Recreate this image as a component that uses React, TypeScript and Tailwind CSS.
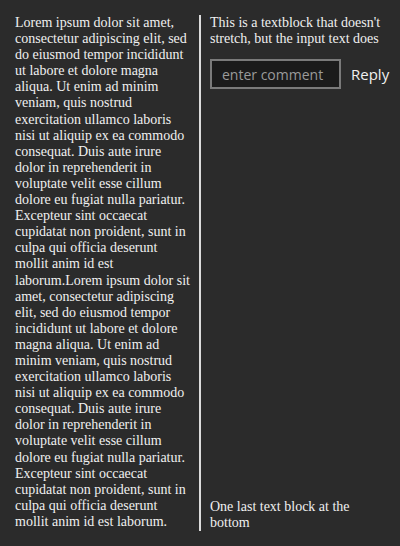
const lorem =
  "Lorem ipsum dolor sit amet, consectetur adipiscing elit, sed do eiusmod tempor incididunt ut labore et dolore magna aliqua. Ut enim ad minim veniam, quis nostrud exercitation ullamco laboris nisi ut aliquip ex ea commodo consequat. Duis aute irure dolor in reprehenderit in voluptate velit esse cillum dolore eu fugiat nulla pariatur. Excepteur sint occaecat cupidatat non proident, sunt in culpa qui officia deserunt mollit anim id est laborum.";

export default function App() {
  return (
    <div className="w-[400px] h-[546px] bg-[#2b2b2b] text-[#f0f0f0] p-[15px] flex font-['Liberation_Serif',serif] text-[14px] leading-[16.1px]">
      {/* Left column */}
      <div className="w-[175px] shrink-0">
        <p>
          {lorem}
          {lorem}
        </p>
      </div>

      {/* Right column */}
      <div className="ml-[9px] flex-1 border-l-2 border-[#dcdcdc] pl-[9px] flex flex-col">
        <p>This is a textblock that doesn't stretch, but the input text does</p>
        <div className="mt-[12px] flex items-center">
          <input
            placeholder="enter comment"
            className="w-[131px] h-[30px] border-2 border-[#7a7a7a] bg-[#1b1b1b] px-[10px] text-[14px] text-white placeholder:text-[#9a9a9a] font-['Open_Sans',sans-serif] outline-none"
          />
          <span className="ml-[10px] text-[15px] text-[#f0f0f0] font-['Open_Sans',sans-serif]">
            Reply
          </span>
        </div>
        <div className="flex-1" />
        <p>One last text block at the bottom</p>
      </div>
    </div>
  );
}
